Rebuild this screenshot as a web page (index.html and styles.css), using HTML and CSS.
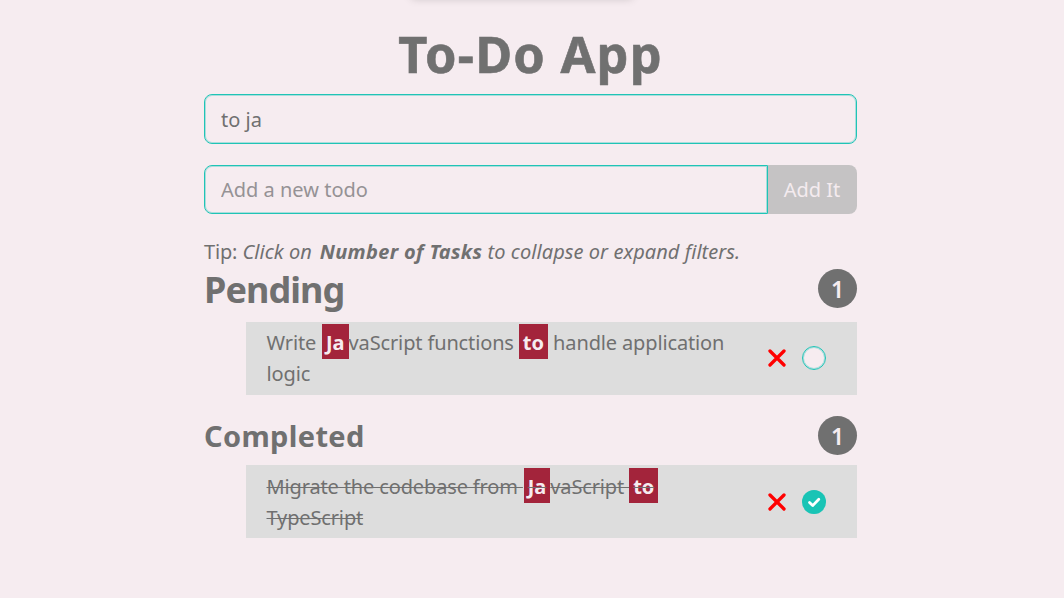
FILE: index.html
```html
<!DOCTYPE html>
<html lang="en">
<head>
<meta charset="utf-8">
<title>To-Do App</title>
<link rel="stylesheet" href="styles.css">
</head>
<body>
<div class="top-shadow"></div>
<main class="app">
  <h1 class="title">To-Do App</h1>
  <input class="field search" type="text" value="to ja" aria-label="Search">
  <form class="add-form">
    <input class="field new-todo" type="text" placeholder="Add a new todo">
    <button class="add-button" type="button" disabled>Add It</button>
  </form>
  <p class="tip"><span class="tip-label">Tip:</span> <em>Click on <strong>Number of Tasks</strong> to collapse or expand filters.</em></p>
  <section class="group pending">
    <header class="group-head"><h2 class="group-name">Pending</h2><span class="count">1</span></header>
    <div class="task">
      <div class="task-text"><div class="line first">Write <mark>Ja</mark>vaScript functions <mark>to</mark> handle application</div><div class="line">logic</div></div>
      <svg class="remove" viewBox="0 0 18 18"><path d="M2 2L16 16M16 2L2 16"/></svg>
      <span class="check"></span>
    </div>
  </section>
  <section class="group completed">
    <header class="group-head"><h3 class="group-name">Completed</h3><span class="count">1</span></header>
    <div class="task">
      <div class="task-text"><div class="line first">Migrate the codebase from <mark>Ja</mark>vaScript <mark>to</mark></div><div class="line">TypeScript</div></div>
      <svg class="remove" viewBox="0 0 18 18"><path d="M2 2L16 16M16 2L2 16"/></svg>
      <span class="check done"><svg class="tick" viewBox="0 0 24 24"><path d="M7.5 12.5L10.7 15.6L16.8 9.2"/></svg></span>
    </div>
  </section>
</main>
</body>
</html>
```
FILE: styles.css
```css
* { box-sizing: border-box; }
body {
  margin: 0;
  height: 598px;
  overflow: hidden;
  background: #f6ecf0;
  color: #707070;
  font: 20px/31px "Segoe UI", "Noto Sans", sans-serif;
}
.top-shadow {
  position: absolute;
  left: 412px;
  top: -12px;
  width: 220px;
  height: 10px;
  box-shadow: 0 0 10px rgba(0, 0, 0, .22);
}
.app { width: 653px; margin-left: 204px; padding-top: 20px; }
.title { margin: 0; height: 74px; font-size: 50.5px; line-height: 68px; letter-spacing: 1.2px; -webkit-text-stroke: .6px #707070; text-align: center; white-space: nowrap; }
.field {
  display: block;
  min-width: 0;
  margin: 0;
  padding: 0 16px;
  border: 1px solid #1fc4b6;
  border-radius: 8px;
  box-shadow: inset 0 0 0 1px rgba(31, 196, 182, .35);
  background: transparent;
  color: #707070;
  font: inherit;
  outline: 0;
}
.search { width: 100%; height: 50px; }
.add-form { display: flex; height: 49px; margin: 21px 0 0; }
.new-todo { width: 564px; height: 49px; border-radius: 8px 0 0 8px; }
.new-todo::placeholder { color: #959295; opacity: 1; }
.add-button {
  width: 89px;
  padding: 0 1px 0 0;
  border: 0;
  border-radius: 0 8px 8px 0;
  background: #c5c3c4;
  color: #f4ebef;
  font: inherit;
}
.tip { margin: 22px 0 0; height: 33px; letter-spacing: .06px; white-space: nowrap; }
.tip-label { letter-spacing: -.2px; }
.tip strong { margin-left: 2.5px; letter-spacing: .33px; }
.group-head { display: flex; justify-content: space-between; height: 39px; }
.group-name { margin: 0; line-height: 42px; white-space: nowrap; }
.pending .group-name { font-size: 36px; letter-spacing: -.95px; }
.completed .group-name { font-size: 29px; line-height: 39px; letter-spacing: .35px; }
.count {
  width: 39px;
  height: 39px;
  border-radius: 50%;
  background: #707070;
  color: #f6ecf0;
  font-size: 23px;
  font-weight: 600;
  line-height: 41px;
  text-align: center;
}
.task {
  display: flex;
  align-items: center;
  height: 73px;
  margin: 13.5px 0 0 41.5px;
  padding: 0 31px 0 21px;
  background: #ddd;
}
.task-text { flex: 1; letter-spacing: -.14px; white-space: nowrap; }
.completed { margin-top: 21px; }
.completed .task { margin-top: 10.5px; }
.completed .line { text-decoration: line-through; text-decoration-thickness: 1px; }
mark { padding: 5px 4px 3px; background: #a3243b; color: #f6ecf0; font-weight: 700; letter-spacing: 0; }
.line mark:first-child { margin-left: .8px; }
.remove { width: 18px; height: 18px; fill: none; stroke: #f00; stroke-width: 3.3; stroke-linecap: round; }
.check {
  width: 24px;
  height: 24px;
  margin-left: 16px;
  border: 1px solid #1fc4b6;
  border-radius: 50%;
  box-shadow: inset 0 0 0 1px rgba(31, 196, 182, .35);
  background: #f6ecf0;
}
.done { border: 0; background: #19c4b5; }
.tick { display: block; width: 24px; height: 24px; fill: none; stroke: #fff; stroke-width: 2.8; stroke-linecap: round; stroke-linejoin: round; }
```
